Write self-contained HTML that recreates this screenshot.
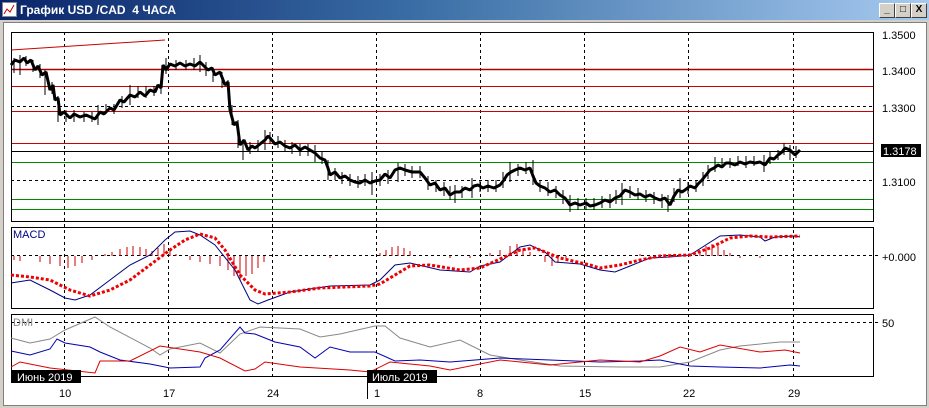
<!DOCTYPE html>
<html><head><meta charset="utf-8"><style>
body{margin:0;width:929px;height:408px;overflow:hidden;background:#d4d0c8;font-family:"Liberation Sans","DejaVu Sans",sans-serif;}
#t{position:absolute;left:0;top:0;width:929px;height:20px;background:linear-gradient(to right,#0a246a,#3a6ea5 45%,#a6caf0);}
#t span{position:absolute;left:20px;top:3px;color:#fff;font-weight:bold;font-size:12px;}
.b{position:absolute;top:3px;width:14px;height:13px;background:#d4d0c8;border:1px solid;border-color:#fff #404040 #404040 #fff;font-size:10px;font-weight:bold;text-align:center;line-height:12px;color:#000}
#c{position:absolute;left:3px;top:22px;width:922px;height:382px;background:#fff;border:1px solid #808080;}
svg{position:absolute;left:0;top:0}
</style></head><body>
<div id="t"><svg width="16" height="16" style="left:2px;top:2px"><rect x="0.5" y="0.5" width="14" height="14" fill="#fff" stroke="#888"/><polyline points="2,12 5,7 8,10 12,3" fill="none" stroke="#c00"/></svg><span>График USD /CAD&nbsp; 4 ЧАСА</span>
<div class="b" style="left:879px">_</div><div class="b" style="left:895px">□</div><div class="b" style="left:911px">X</div></div>
<div id="c"></div>
<svg width="929" height="408" font-family="Liberation Sans, DejaVu Sans, sans-serif" font-size="11">
<g stroke="#000" stroke-width="1" stroke-dasharray="3,3">
<line x1="64.5" y1="32" x2="64.5" y2="376"/><line x1="168.5" y1="32" x2="168.5" y2="376"/><line x1="272.5" y1="32" x2="272.5" y2="376"/><line x1="376.5" y1="32" x2="376.5" y2="376"/><line x1="480.5" y1="32" x2="480.5" y2="376"/><line x1="584.5" y1="32" x2="584.5" y2="376"/><line x1="688.5" y1="32" x2="688.5" y2="376"/><line x1="793.5" y1="32" x2="793.5" y2="376"/>
<line x1="11" y1="106.5" x2="874" y2="106.5"/><line x1="11" y1="180.5" x2="874" y2="180.5"/>
<line x1="11" y1="255.5" x2="880" y2="255.5"/><line x1="11" y1="322.5" x2="880" y2="322.5"/>
</g>
<g fill="none" stroke-width="1">
<line x1="11" y1="69.5" x2="874" y2="69.5" stroke="#a00" stroke-width="1.5"/>
<line x1="11" y1="86.5" x2="874" y2="86.5" stroke="#c00"/>
<line x1="11" y1="111.5" x2="874" y2="111.5" stroke="#c00"/>
<line x1="11" y1="143.5" x2="874" y2="143.5" stroke="#c00"/>
<line x1="11" y1="151.5" x2="874" y2="151.5" stroke="#000"/>
<line x1="11" y1="162.5" x2="874" y2="162.5" stroke="#080"/>
<line x1="11" y1="199.5" x2="874" y2="199.5" stroke="#080"/>
<line x1="11" y1="209.5" x2="874" y2="209.5" stroke="#080"/>
<line x1="11" y1="50" x2="165" y2="40" stroke="#c00"/>
<rect x="11.5" y="32.5" width="862" height="189" stroke="#000"/>
<rect x="11.5" y="227.5" width="862" height="81" stroke="#000"/>
<rect x="11.5" y="314.5" width="862" height="62" stroke="#000"/>
</g>
<polyline fill="none" stroke="#000" stroke-width="3" stroke-linejoin="bevel" points="11,65 15,60 20,62 24,58 27,63 31,60 35,70 38,66 42,75 46,72 50,90 53,85 55,100 58,98 60,115 64,112 70,118 74,114 80,117 86,115 95,119 100,112 104,114 110,108 114,110 120,100 124,102 130,95 135,97 140,92 145,96 150,90 155,92 158,85 161,88 163,65 166,70 170,64 175,66 180,63 185,66 190,64 195,66 200,62 204,66 208,70 212,68 215,75 220,72 225,85 228,82 230,110 234,125 237,122 240,145 244,140 248,150 252,146 255,148 260,144 265,140 268,136 270,138 275,144 280,142 285,146 290,148 295,145 300,150 305,147 310,150 315,153 320,158 325,160 328,168 330,175 335,172 340,178 345,176 350,180 355,182 360,183 365,180 370,183 375,181 380,180 385,174 390,178 395,170 400,168 405,170 412,172 420,172 425,178 430,185 435,183 440,190 445,188 450,195 455,192 460,192 465,188 470,190 474,186 478,185 483,188 488,186 494,188 500,185 504,180 507,175 511,172 515,170 520,168 525,170 530,168 533,176 536,183 540,186 545,188 550,192 555,190 560,195 565,198 570,205 575,203 580,205 586,203 590,206 595,205 600,203 605,200 610,202 615,198 620,196 625,190 630,192 635,195 640,194 645,197 650,195 655,198 660,200 665,198 670,205 674,196 678,190 682,192 685,190 690,186 695,188 698,184 702,180 706,175 710,170 714,168 718,165 722,167 726,163 730,163 735,165 740,162 745,164 750,162 755,163 760,162 765,165 770,158 774,159 778,155 782,152 785,148 790,150 795,155 800,150"/>
<g stroke="#000">
<path d="M14 58v15M20 55v20M26 56v10M33 60v12M40 64v14M45 70v25M52 82v12M58 96v26M66 110v12M74 110v12M84 112v10M92 112v10M98 105v20M106 104v10M114 104v10M122 96v12M130 85v20M138 86v12M146 86v12M154 86v10M161 80v14M166 58v16M176 60v10M186 60v10M194 58v12M200 55v17M206 62v14M213 68v14M222 72v16M228 80v15M232 105v20M238 120v28M243 140v20M250 142v12M258 140v12M265 130v20M270 132v12M278 136v12M285 140v12M292 142v12M300 144v12M308 144v12M315 145v17M322 152v12M328 160v20M335 168v12M342 172v12M350 174v12M358 176v12M365 174v12M372 172v23M380 174v12M388 170v14M398 163v19M405 164v12M412 166v12M420 166v12M428 176v14M436 180v12M444 182v14M450 186v14M455 185v18M462 186v12M472 178v20M480 180v12M488 180v12M496 180v12M503 172v16M510 162v20M518 164v12M526 162v12M533 160v25M540 180v12M548 182v14M556 186v12M563 190v14M570 195v17M578 198v12M586 198v12M594 198v12M602 196v12M610 194v14M616 190v14M622 183v22M630 186v12M638 188v12M646 190v12M654 192v12M662 194v14M668 195v17M674 188v14M680 178v20M688 182v12M696 180v12M703 172v14M708 165v14M715 157v15M722 158v10M730 158v10M738 156v10M746 156v12M754 156v10M764 155v17M770 152v12M778 150v10M784 143v12M790 145v15M796 146v12"/>
</g>
<g stroke="#c00" stroke-width="1">
<path d="M14 256v4M20 256v5M40 256v6M50 256v8M60 256v10M68 256v12M75 256v10M82 256v7M92 256v4M105 256v-2M112 256v-4M120 256v-7M127 256v-9M133 256v-10M140 256v-9M146 256v-7M152 256v-5M158 256v-8M164 256v-12M170 256v-6M176 256v-2M190 256v4M200 256v6M210 256v8M220 256v10M228 256v14M234 256v20M240 256v24M246 256v20M252 256v18M258 256v12M264 256v6M290 256v-2M330 256v2M380 256v-3M386 256v-6M392 256v-9M398 256v-10M404 256v-8M410 256v-5M450 256v2M470 256v2M490 256v-3M500 256v-6M510 256v-10M517 256v-12M523 256v-7M530 256v-4M545 256v6M552 256v10M558 256v7M566 256v4M640 256v-2M700 256v-4M706 256v-10M712 256v-12M718 256v-10M724 256v-6M730 256v-3M740 256v2M760 256v2"/>
</g>
<polyline fill="none" stroke="#000080" stroke-width="1" points="11,283 30,280 50,290 65,298 75,300 90,295 110,280 130,265 150,255 165,240 175,232 190,231 200,235 215,245 235,270 250,300 258,304 268,300 290,292 330,286 370,285 380,280 395,265 410,263 440,270 470,272 480,266 500,262 520,247 530,245 545,252 555,262 580,264 600,270 615,272 630,266 650,258 670,257 690,255 720,236 740,235 760,237 765,241 775,237 795,236 800,237"/>
<polyline fill="none" stroke="#e00" stroke-width="3" stroke-dasharray="3,2" points="11,275 30,277 50,280 70,290 90,296 110,290 130,280 150,265 170,250 185,240 200,234 215,238 225,250 240,275 255,290 265,294 290,292 320,288 370,286 380,284 410,266 430,265 460,270 480,268 520,250 535,248 560,258 590,265 600,268 620,265 640,260 660,256 690,255 710,248 730,238 750,236 770,237 800,236"/>
<polyline fill="none" stroke="#888" points="11,338 30,343 50,339 65,330 95,317 110,327 150,348 160,355 170,349 200,343 220,353 240,334 260,327 300,329 320,337 340,334 375,326 385,326 400,338 430,347 460,340 490,355 520,360 560,366 620,367 660,367 690,362 720,350 740,346 780,342 800,342"/>
<polyline fill="none" stroke="#0000b0" points="11,351 30,355 50,349 57,339 65,343 90,347 100,352 120,360 150,364 170,368 200,367 205,358 220,350 240,327 245,333 255,334 275,342 300,347 315,358 330,347 350,352 375,352 395,361 420,360 450,362 500,358 550,360 600,362 640,361 660,360 690,366 720,367 760,368 790,365 800,366"/>
<polyline fill="none" stroke="#d00" points="11,367 20,362 50,368 95,373 100,361 130,361 160,346 200,352 220,358 245,371 255,369 265,362 300,367 350,370 370,372 390,362 430,366 450,370 500,360 550,365 600,360 640,362 660,356 680,347 700,352 720,345 760,352 785,350 800,353"/>
<text x="13" y="238" fill="#000080">MACD</text>
<text x="13" y="326" fill="#888">DMI</text>
<g fill="#000">
<text x="882" y="39">1.3500</text><text x="882" y="75">1.3400</text><text x="882" y="112">1.3300</text><text x="882" y="186">1.3100</text>
<text x="882" y="261">+0.000</text><text x="882" y="327">50</text>
<rect x="881" y="144" width="40" height="13"/>
<text x="59" y="397">10</text><text x="163" y="397">17</text><text x="267" y="397">24</text><text x="374" y="397">1</text><text x="477" y="397">8</text><text x="579" y="397">15</text><text x="683" y="397">22</text><text x="788" y="397">29</text>
<rect x="11" y="370" width="70" height="13"/><rect x="367" y="370" width="70" height="13"/>
<rect x="367" y="383" width="1" height="16"/>
</g>
<text x="883" y="155" fill="#fff">1.3178</text>
<text x="17" y="381" fill="#fff">Июнь 2019</text>
<text x="372" y="381" fill="#fff">Июль 2019</text>
</svg>
</body></html>
